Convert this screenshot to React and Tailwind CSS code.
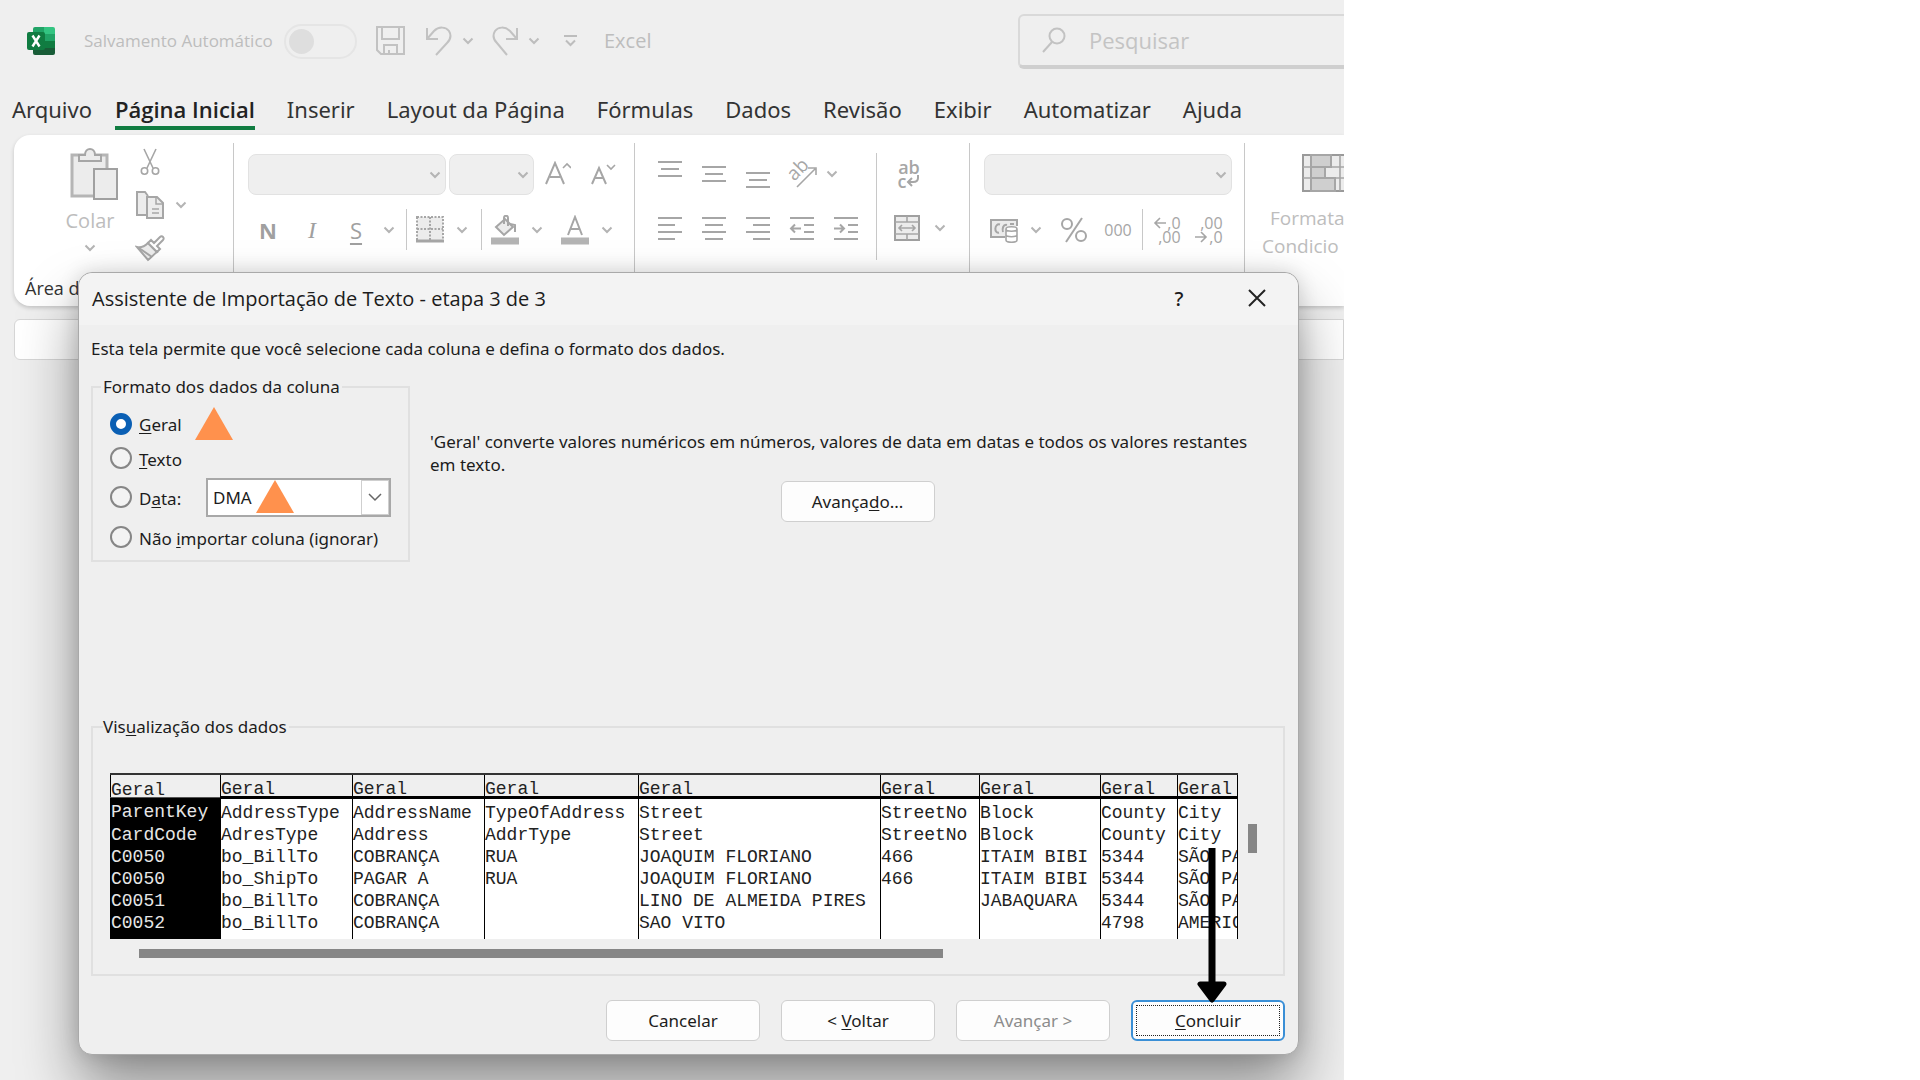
import React from "react";

const GRAY = "#a6a6a6";
const FILL = "#ececec";

function Icon({ w, h, children, className = "" }) {
  return (
    <svg width={w} height={h} viewBox={`0 0 ${w} ${h}`} fill="none" stroke={GRAY} strokeWidth="2" className={`shrink-0 ${className}`} aria-hidden="true">
      {children}
    </svg>
  );
}

function Chevron({ color = "#b4b4b4" }) {
  return (
    <svg width="12" height="8" viewBox="0 0 12 8" fill="none" stroke={color} strokeWidth="2" className="shrink-0" aria-hidden="true">
      <path d="M1.500 1.500 6 6l4.500-4.500" />
    </svg>
  );
}

function Tool({ label, className = "w-[44px]", children }) {
  return (
    <button type="button" aria-label={label} className={`flex h-10 shrink-0 items-center justify-center ${className}`}>
      {children}
    </button>
  );
}

function Rule() {
  return <div className="mx-[6px] h-[41px] w-px shrink-0 bg-[#c8c8c8]" />;
}

function Combo({ label, className }) {
  return (
    <button type="button" aria-label={label} className={`flex h-[41px] shrink-0 items-center justify-end rounded-lg border border-[#e2e2e2] bg-[#efefef] pr-1 ${className}`}>
      <Chevron />
    </button>
  );
}

function Lines({ rows, h = 26 }) {
  return (
    <Icon w={26} h={h}>
      {rows.map(([x, y, len]) => (
        <path key={y} d={`M${x} ${y}h${len}`} strokeWidth="2" />
      ))}
    </Icon>
  );
}

function ExcelLogo() {
  return (
    <svg width="29" height="28" viewBox="0 0 29 28" aria-hidden="true" className="shrink-0">
      <path d="M6 2a2 2 0 0 1 2-2h9v7H6z" fill="#21a366" />
      <path d="M17 0h9a2 2 0 0 1 2 2v5H17z" fill="#33c481" />
      <path d="M6 7h11v7H6z" fill="#107c41" />
      <path d="M17 7h11v7H17z" fill="#21a366" />
      <path d="M6 14h11v7H6z" fill="#185c37" />
      <path d="M17 14h11v7H17z" fill="#107c41" />
      <path d="M6 21h22v5a2 2 0 0 1-2 2H8a2 2 0 0 1-2-2z" fill="#185c37" />
      <rect x="0" y="5" width="18" height="18" rx="2" fill="#107c41" />
      <path d="M5.500 8.500l7 11M12.500 8.500l-7 11" stroke="#fff" strokeWidth="2.400" />
    </svg>
  );
}

function TitleBar() {
  return (
    <header className="flex h-[82px] items-center pl-[27px] text-[#bdbdbd]">
      <ExcelLogo />
      <label htmlFor="autosave" className="ml-[28px] w-[200px] shrink-0 text-[17px] whitespace-nowrap">Salvamento Automático</label>
      <button id="autosave" type="button" role="switch" aria-checked="false" className="flex h-[35px] w-[73px] shrink-0 items-center rounded-full border-2 border-[#e5e5e5] pl-[3px]">
        <span className="size-[25px] rounded-full bg-[#dedede]" />
      </button>
      <button type="button" aria-label="Salvar" className="ml-[19px]">
        <svg width="30" height="30" viewBox="0 0 30 30" fill="none" stroke="#c2c2c2" strokeWidth="2" aria-hidden="true">
          <path d="M1 1h27v27H5l-4-4zM6 1v12h17V1M8 28v-9h13v9M13 28v-4" />
        </svg>
      </button>
      <button type="button" aria-label="Desfazer" className="ml-[19px]">
        <svg width="28" height="30" viewBox="0 0 28 30" fill="none" stroke="#c2c2c2" strokeWidth="2" aria-hidden="true">
          <path d="M2 2v11h11M2 13 9 5c5-5 12-4 15 0 3 5 1 9-2 12L11 29" />
        </svg>
      </button>
      <button type="button" aria-label="Opções de desfazer" className="ml-[9px]"><Chevron color="#bdbdbd" /></button>
      <button type="button" aria-label="Refazer" className="ml-[17px]">
        <svg width="28" height="30" viewBox="0 0 28 30" fill="none" stroke="#c2c2c2" strokeWidth="2" aria-hidden="true">
          <path d="M26 2v11H15M26 13 19 5C14 0 7 1 4 5c-3 5-1 9 2 12l10 12" />
        </svg>
      </button>
      <button type="button" aria-label="Opções de refazer" className="ml-[9px]"><Chevron color="#bdbdbd" /></button>
      <button type="button" aria-label="Personalizar" className="ml-[24px]">
        <svg width="13" height="12" viewBox="0 0 13 12" fill="none" stroke="#bdbdbd" strokeWidth="2" aria-hidden="true">
          <path d="M0 1h13M2 5.500l4.500 4.500L11 5.500" />
        </svg>
      </button>
      <span className="ml-[27px] text-[20px]">Excel</span>
      <div className="mr-[-10px] ml-auto flex h-[55px] w-[336px] shrink-0 items-center rounded-md border-2 border-b-4 border-[#d9d9d9] border-b-[#cfcfcf] pl-[22px]">
        <svg width="25" height="26" viewBox="0 0 25 26" fill="none" stroke="#c2c2c2" strokeWidth="2" aria-hidden="true">
          <circle cx="15" cy="9" r="7.500" />
          <path d="M10 15 1 25" />
        </svg>
        <input type="search" aria-label="Pesquisar" placeholder="Pesquisar" className="ml-[22px] w-[200px] text-[22px] leading-[30px] outline-none placeholder:text-[#c4c4c4]" />
      </div>
    </header>
  );
}

const TABS = ["Inserir", "Layout da Página", "Fórmulas", "Dados", "Revisão", "Exibir", "Automatizar", "Ajuda"];

function Tabs() {
  return (
    <nav className="flex h-[53px] items-start gap-[32px] pt-[13px] pl-[12px] font-['Noto_Sans',sans-serif] text-[22px] leading-[28px] whitespace-nowrap text-[#333]">
      <button type="button" className="-mr-[9px]">Arquivo</button>
      <button type="button" className="border-b-4 border-[#107c41] pb-[3px] font-['Open_Sans',sans-serif] font-semibold text-[#222]">Página Inicial</button>
      {TABS.map((t) => (
        <button key={t} type="button">{t}</button>
      ))}
    </nav>
  );
}

function Clipboard() {
  return (
    <section className="flex w-[220px] shrink-0 flex-col">
      <div className="flex pl-[51px]">
        <button type="button" className="flex w-[50px] flex-col items-center pt-[13px] text-xl text-[#bdbdbd]">
          <Icon w={48} h={54} className="ml-[7px]">
            <path d="M2 7h35v41H2z" fill={FILL} stroke="#b5b5b5" strokeWidth="3" />
            <path d="M9 13V7h6c0-8 10-8 10 0h6v6z" fill={FILL} />
            <path d="M24 21h23v30H24z" fill={FILL} stroke="#a0a0a0" />
          </Icon>
          <span className="mt-1 leading-[30px]">Colar</span>
          <span className="mt-2"><Chevron /></span>
        </button>
        <div className="ml-[18px] flex flex-col items-start pt-[7px]">
          <Tool label="Recortar" className="w-[34px]">
            <Icon w={20} h={28}>
              <path d="M4 1l9 19M16 1 7 20" strokeWidth="1.600" />
              <circle cx="4.500" cy="23" r="3.200" strokeWidth="1.600" />
              <circle cx="15.500" cy="23" r="3.200" strokeWidth="1.600" />
            </Icon>
          </Tool>
          <div className="mt-[3px] flex">
            <Tool label="Copiar" className="w-[34px]">
              <Icon w={30} h={30}>
                <path d="M11 25H2V2h8l3 4" fill={FILL} />
                <path d="M12 7h10l6 6v15H12z" fill={FILL} />
                <path d="M21 7v7h7M17 19h7M17 23h7" strokeWidth="1.500" />
              </Icon>
            </Tool>
            <Tool label="Opções de copiar" className="w-[28px]"><Chevron /></Tool>
          </div>
          <Tool label="Pincel de formatação" className="mt-[3px] w-[34px]">
            <Icon w={30} h={30}>
              <path d="M2 14c5 1 8-1 11-4l9 9c-3 2-5 5-9 8z" fill={FILL} />
              <path d="M13 10l3-3 3 3 6-6c2-2 5 1 3 3l-6 6 3 3-3 3z" fill="#fff" />
              <path d="M4 15l13 9" />
            </Icon>
          </Tool>
        </div>
      </div>
      <span className="mt-[8px] pl-[11px] text-[18px] leading-6 whitespace-nowrap text-[#333]">Área d</span>
    </section>
  );
}

function Font() {
  return (
    <section className="flex w-[401px] shrink-0 flex-col gap-[14px] pt-[19px] pl-[12px]">
      <div className="flex h-[41px] items-center pl-[2px]">
        <Combo label="Fonte" className="w-[198px]" />
        <Combo label="Tamanho da fonte" className="ml-[3px] w-[85px]" />
        <Tool label="Aumentar fonte" className="ml-[2px] w-[44px]">
          <Icon w={26} h={28}>
            <path d="M1 23 10 2l9 21M5 16h10" />
            <path d="M18 7l4-4 4 4" strokeWidth="1.600" />
          </Icon>
        </Tool>
        <Tool label="Diminuir fonte" className="w-[46px]">
          <Icon w={26} h={28}>
            <path d="M2 23 9 7l7 16M5 17h8" />
            <path d="M17 4l4 4 4-4" strokeWidth="1.600" />
          </Icon>
        </Tool>
      </div>
      <div className="flex items-center text-[#a0a0a0]">
        <Tool label="Negrito"><span className="text-[22px] leading-7 font-bold">N</span></Tool>
        <Tool label="Itálico"><span className="font-['Liberation_Serif',serif] text-2xl leading-7 italic">I</span></Tool>
        <Tool label="Sublinhado"><span className="text-[22px] leading-7 underline underline-offset-4">S</span></Tool>
        <Tool label="Opções de sublinhado" className="w-[22px]"><Chevron /></Tool>
        <Rule />
        <Tool label="Bordas" className="w-[34px]">
          <Icon w={28} h={28}>
            <path d="M1 1h26v24H1z" fill={FILL} strokeDasharray="2 1.500" />
            <path d="M14 1v24M1 13h26" strokeDasharray="2 1.500" />
            <path d="M0 25h28" strokeWidth="3" />
          </Icon>
        </Tool>
        <Tool label="Opções de bordas" className="w-[30px]"><Chevron /></Tool>
        <div className="mr-[6px] ml-[4px] h-[41px] w-px bg-[#c8c8c8]" />
        <Tool label="Cor de preenchimento" className="w-[34px]">
          <Icon w={28} h={30}>
            <path d="M5 12 14 4l8 8-9 8z" fill={FILL} />
            <path d="M13 9V3c0-3 4-3 4 0v8M19 9l5 1v7" />
            <path d="M0 26h28" stroke="#b4b4b4" strokeWidth="7" />
          </Icon>
        </Tool>
        <Tool label="Opções de preenchimento" className="w-[30px]"><Chevron /></Tool>
        <Tool label="Cor da fonte" className="w-[46px]">
          <Icon w={28} h={30}>
            <path d="M7 20 14 2l7 18M9 14h10" />
            <path d="M0 26h28" stroke="#b4b4b4" strokeWidth="7" />
          </Icon>
        </Tool>
        <Tool label="Opções de cor da fonte" className="w-[18px]"><Chevron /></Tool>
      </div>
    </section>
  );
}

function Alignment() {
  return (
    <section className="flex w-[335px] shrink-0 items-start pt-[18px] pl-[13px]">
      <div className="flex w-[220px] flex-col gap-[15px]">
        <div className="flex h-[41px] items-center">
          <Tool label="Alinhar em cima"><Lines h={30} rows={[[1, 3, 24], [4, 10, 18], [1, 17, 24]]} /></Tool>
          <Tool label="Alinhar no meio"><Lines h={30} rows={[[1, 8, 24], [4, 15, 18], [1, 22, 24]]} /></Tool>
          <Tool label="Alinhar embaixo"><Lines h={30} rows={[[1, 14, 24], [4, 21, 18], [1, 28, 24]]} /></Tool>
          <Tool label="Orientação">
            <span className="relative flex">
              <Icon w={30} h={30}><path d="M10 28 28 10M21 9h8v7" strokeWidth="1.600" /></Icon>
              <span className="absolute -top-[1px] -left-[1px] -rotate-45 text-[19px] leading-[22px] text-[#a6a6a6]">ab</span>
            </span>
          </Tool>
          <Tool label="Opções de orientação" className="w-[16px]"><Chevron /></Tool>
        </div>
        <div className="flex items-center">
          <Tool label="Alinhar à esquerda"><Lines rows={[[1, 2, 24], [1, 9, 17], [1, 16, 24], [1, 23, 17]]} /></Tool>
          <Tool label="Centralizar"><Lines rows={[[1, 2, 24], [4, 9, 18], [1, 16, 24], [4, 23, 18]]} /></Tool>
          <Tool label="Alinhar à direita"><Lines rows={[[1, 2, 24], [8, 9, 17], [1, 16, 24], [8, 23, 17]]} /></Tool>
          <Tool label="Diminuir recuo">
            <Icon w={26} h={26}><path d="M1 2h24M15 9h10M15 16h10M1 23h24M12 12.500H2M6 8.500l-4 4 4 4" /></Icon>
          </Tool>
          <Tool label="Aumentar recuo">
            <Icon w={26} h={26}><path d="M1 2h24M15 9h10M15 16h10M1 23h24M1 12.500h10M7 8.500l4 4-4 4" /></Icon>
          </Tool>
        </div>
      </div>
      <div className="mx-[8px] h-[107px] w-px bg-[#c8c8c8]" />
      <div className="flex flex-col gap-[14px]">
        <Tool label="Quebrar texto automaticamente" className="mt-px w-[48px]">
          <span className="flex flex-col text-[18px] leading-[14px] font-semibold text-[#a6a6a6]">
            <span>ab</span>
            <span className="flex items-center">c<Icon w={14} h={14}><path d="M12 1v3c0 3-2 4-5 4H2M6 4 2 8l4 4" /></Icon></span>
          </span>
        </Tool>
        <div className="flex">
          <Tool label="Mesclar e centralizar">
            <Icon w={28} h={28}>
              <path d="M2 2h24v24H2z" fill={FILL} stroke="#a0a0a0" />
              <path d="M2 8h24M2 20h24M14 2v6M14 20v6M6 14h16M9 11l-3 3 3 3M19 11l3 3-3 3" strokeWidth="1.600" />
            </Icon>
          </Tool>
          <Tool label="Opções de mesclar" className="w-[22px]"><Chevron /></Tool>
        </div>
      </div>
    </section>
  );
}

function NumberGroup() {
  return (
    <section className="flex w-[275px] shrink-0 flex-col gap-[14px] pt-[19px] pl-[14px]">
      <Combo label="Formato de número" className="w-[248px]" />
      <div className="flex items-center text-[#a6a6a6]">
        <Tool label="Formato de contabilização" className="w-[40px]">
          <Icon w={30} h={26}>
            <path d="M16 20H2V3h26v6" fill={FILL} />
            <path d="M11 7.500C5 6 5 17 10 15.500M18 8c-4-1-5 4-4 7M21 7h4" />
            <path d="M17 12v11c0 3 11 3 11 0V12c0-3-11-3-11 0zm0 0c0 3 11 3 11 0M17 17.500c0 3 11 3 11 0" fill="#fff" strokeWidth="1.600" />
          </Icon>
        </Tool>
        <Tool label="Opções de contabilização" className="w-[24px]"><Chevron /></Tool>
        <Tool label="Porcentagem" className="w-[52px]">
          <Icon w={28} h={26}>
            <circle cx="7" cy="7" r="5" />
            <circle cx="21" cy="19" r="5" />
            <path d="M22 1 6 25" />
          </Icon>
        </Tool>
        <Tool label="Separador de milhares" className="w-[36px]"><span className="text-base">000</span></Tool>
        <Rule />
        <Tool label="Aumentar casas decimais" className="w-[36px]">
          <span className="flex flex-col items-end text-base leading-[14px]">
            <span className="flex items-center"><Icon w={14} h={12}><path d="M13 6H2M7 1 2 6l5 5" strokeWidth="1.600" /></Icon>,0</span>
            <span>,00</span>
          </span>
        </Tool>
        <Tool label="Diminuir casas decimais" className="w-[48px]">
          <span className="flex flex-col items-end text-base leading-[14px]">
            <span>,00</span>
            <span className="flex items-center"><Icon w={14} h={12}><path d="M0 6h11M6 1l5 5-5 5" strokeWidth="1.600" /></Icon>,0</span>
          </span>
        </Tool>
      </div>
    </section>
  );
}

function Styles() {
  return (
    <section className="flex shrink-0 flex-col pt-[18px] pl-[17px]">
      <button type="button" className="flex flex-col items-start text-[19px] leading-7 text-[#bdbdbd]">
        <Icon w={48} h={40} className="ml-9">
          <path d="M5 2h42v36H5z" fill={FILL} stroke="#9a9a9a" />
          <path d="M13 2h20v12H13zM13 14h14v11H13zM13 25h24v13H13z" fill="#cfcfcf" />
          <path d="M5 14h42M5 25h42M13 2v36M42 2v36" strokeWidth="1.600" />
        </Icon>
        <span className="mt-[11px] ml-[8px]">Formata</span>
        <span>Condicio</span>
      </button>
    </section>
  );
}

function Divider() {
  return <div className="-ml-px mt-2 h-[150px] w-px shrink-0 bg-[#c8c8c8]" />;
}

function Ribbon() {
  return (
    <div className="ml-[14px] flex h-[171px] overflow-hidden rounded-l-2xl bg-white shadow-[0_2px_4px_rgba(0,0,0,0.18)]">
      <Clipboard />
      <Divider />
      <Font />
      <Divider />
      <Alignment />
      <Divider />
      <NumberGroup />
      <Divider />
      <Styles />
    </div>
  );
}

function Triangle() {
  return (
    <svg width="38" height="33" viewBox="0 0 38 33" aria-hidden="true" className="pointer-events-none">
      <path d="M19 0 38 33H0z" fill="#ff914d" />
    </svg>
  );
}

function Radio({ id, checked, children }) {
  return (
    <div className="flex items-center">
      <input
        id={id}
        type="radio"
        name="formato"
        defaultChecked={checked}
        className="size-[22px] shrink-0 appearance-none rounded-full border-2 border-[#868686] bg-[#f3f3f3] checked:border-[6px] checked:border-[#0a5fb4] checked:bg-white"
      />
      <label htmlFor={id} className="pt-[2px] pl-[7px] whitespace-nowrap">{children}</label>
    </div>
  );
}

const U = ({ children }) => <span className="underline underline-offset-2">{children}</span>;

function FormatFieldset() {
  return (
    <fieldset className="h-[188px] w-[318px] shrink-0 border-2 border-[#e0e0e0] px-[17px]">
      <legend className="-ml-[9px] px-[2px] leading-[26px]">Formato dos dados da coluna</legend>
      <div className="flex flex-col pt-[2px]">
        <div className="flex h-[38px] items-center gap-[13px] pt-[5px]">
          <Radio id="geral" checked><U>G</U>eral</Radio>
          <Triangle />
        </div>
        <div className="flex h-[36px] items-center">
          <Radio id="texto"><U>T</U>exto</Radio>
        </div>
        <div className="flex h-[42px] items-center">
          <div className="w-[96px]"><Radio id="data">D<U>a</U>ta:</Radio></div>
          <div className="relative w-[185px] shrink-0">
            <select aria-label="Formato de data" className="h-[39px] w-full appearance-none border-2 border-[#a8a8a8] bg-white pl-[5px]">
              <option>DMA</option>
            </select>
            <span className="pointer-events-none absolute top-[2px] right-[2px] flex h-[35px] w-[28px] items-center justify-center border border-[#cfcfcf]">
              <svg width="14" height="9" viewBox="0 0 14 9" fill="none" stroke="#666" strokeWidth="1.500" aria-hidden="true"><path d="M1 1l6 6 6-6" /></svg>
            </span>
            <span className="absolute top-[2px] left-[50px]"><Triangle /></span>
          </div>
        </div>
        <div className="flex h-[38px] items-center">
          <Radio id="ignorar">Não <U>i</U>mportar coluna (ignorar)</Radio>
        </div>
      </div>
    </fieldset>
  );
}

const COLUMNS = [
  "w-[110px]", "w-[132px]", "w-[132px]", "w-[154px]", "w-[242px]", "w-[99px]", "w-[121px]", "w-[77px]", "w-[60px]",
];
const ROWS = [
  ["ParentKey", "AddressType", "AddressName", "TypeOfAddress", "Street", "StreetNo", "Block", "County", "City"],
  ["CardCode", "AdresType", "Address", "AddrType", "Street", "StreetNo", "Block", "County", "City"],
  ["C0050", "bo_BillTo", "COBRANÇA", "RUA", "JOAQUIM FLORIANO", "466", "ITAIM BIBI", "5344", "SÃO PA"],
  ["C0050", "bo_ShipTo", "PAGAR A", "RUA", "JOAQUIM FLORIANO", "466", "ITAIM BIBI", "5344", "SÃO PA"],
  ["C0051", "bo_BillTo", "COBRANÇA", "", "LINO DE ALMEIDA PIRES", "", "JABAQUARA", "5344", "SÃO PA"],
  ["C0052", "bo_BillTo", "COBRANÇA", "", "SAO VITO", "", "", "4798", "AMERIC"],
];

function Preview() {
  return (
    <fieldset className="border-2 border-[#e0e0e0] pb-[16px] pl-[17px]">
      <legend className="-ml-[7px] pr-[2px] leading-[26px]">Vis<U>u</U>alização dos dados</legend>
      <div className="flex pt-[33px]">
        <table className="w-[1128px] table-fixed border-collapse bg-white text-left font-['Liberation_Mono',monospace] text-lg leading-[22px] text-[#222]">
          <colgroup>
            {COLUMNS.map((c, i) => <col key={i} className={c} />)}
          </colgroup>
          <thead>
            <tr>
              {COLUMNS.map((c, i) => (
                <th key={i} className={`h-[23px] border-x border-t-2 border-x-black border-t-[#333] bg-[#efefef] p-0 align-bottom leading-[14px] font-normal ${i ? "border-b-[3px] border-b-black" : "border-b border-b-[#555]"}`}>Geral</th>
              ))}
            </tr>
          </thead>
          <tbody>
            {ROWS.map((r, n) => (
              <tr key={n}>
                {r.map((v, i) => (
                  <td key={i} className={`overflow-hidden border-x border-black p-0 whitespace-nowrap ${n ? "" : "pt-[3px]"} ${i ? "" : "bg-black text-[#e6e6e6]"}`}>{v}</td>
                ))}
              </tr>
            ))}
            <tr>
              {COLUMNS.map((c, i) => <td key={i} className={`h-[5px] border-x border-black p-0 ${i ? "" : "bg-black"}`} />)}
            </tr>
          </tbody>
        </table>
        <div className="mt-[51px] ml-[10px] h-[29px] w-[9px] bg-[#868686]" />
      </div>
      <div className="mt-[10px] ml-[29px] h-[9px] w-[804px] bg-[#868686]" />
    </fieldset>
  );
}

const BUTTON = "h-[41px] w-[154px] rounded-md border border-[#cfcfcf] bg-[#fdfdfd]";

function Dialog() {
  return (
    <div role="dialog" aria-labelledby="dialog-title" className="absolute top-[272px] right-[45px] left-[78px] rounded-[14px] border border-[#a9a9a9] bg-[#efefef] font-['Noto_Sans',sans-serif] text-[17px] leading-[23px] text-[#1c1c1c] shadow-[0_34px_60px_rgba(0,0,0,0.4),0_0_20px_rgba(0,0,0,0.14)]">
      <div className="flex h-[52px] items-center rounded-t-[14px] bg-[#f3f3f3] pb-[2px] pl-[13px]">
        <h1 id="dialog-title" className="font-['Open_Sans',sans-serif] text-[20px]">Assistente de Importação de Texto - etapa 3 de 3</h1>
        <button type="button" aria-label="Ajuda" className="ml-auto w-[30px] text-[20px] font-medium">?</button>
        <button type="button" aria-label="Fechar" className="mr-[32px] ml-[54px]">
          <svg width="18" height="18" viewBox="0 0 18 18" stroke="#222" strokeWidth="2" aria-hidden="true"><path d="M1 1l16 16M17 1 1 17" /></svg>
        </button>
      </div>
      <div className="pr-[13px] pb-[13px] pl-[12px]">
        <p className="mt-[12px]">Esta tela permite que você selecione cada coluna e defina o formato dos dados.</p>
        <div className="mt-[14px] flex">
          <FormatFieldset />
          <div className="flex flex-1 flex-col items-center pt-[56px] pl-[20px]">
            <p className="w-full pr-[18px]">'Geral' converte valores numéricos em números, valores de data em datas e todos os valores restantes em texto.</p>
            <button type="button" className={`mt-[5px] ${BUTTON}`}>Avança<U>d</U>o...</button>
          </div>
        </div>
        <div className="mt-[152px]">
          <Preview />
        </div>
        <div className="relative mt-[24px] flex justify-end gap-[21px]">
          <button type="button" className={BUTTON}>Cancelar</button>
          <button type="button" className={BUTTON}>&lt; <U>V</U>oltar</button>
          <button type="button" disabled className={`${BUTTON} text-[#8c8c8c]`}>Avançar &gt;</button>
          <button type="button" className="h-[41px] w-[154px] rounded-md border-2 border-[#3a8fd6] bg-[#fdfdfd] p-[3px]">
            <span className="flex h-full items-center justify-center border border-dotted border-[#222]"><span><U>C</U>oncluir</span></span>
          </button>
          <svg width="30" height="156" viewBox="0 0 30 156" aria-hidden="true" className="pointer-events-none absolute right-[58px] bottom-[37px]">
            <path d="M15 0v136" stroke="#000" strokeWidth="7" />
            <path d="M3 136h24l-12 16z" fill="#000" stroke="#000" strokeWidth="5" strokeLinejoin="round" />
          </svg>
        </div>
      </div>
    </div>
  );
}

export default function App() {
  return (
    <div className="min-h-screen bg-white font-['Open_Sans','Noto_Sans',sans-serif]">
      <main className="relative min-h-screen w-[70%] overflow-hidden bg-[#efefef]">
        <TitleBar />
        <Tabs />
        <Ribbon />
        <div className="mt-[13px] ml-[14px] h-[41px] rounded-l-md border border-[#d6d6d6] bg-white" />
        <Dialog />
      </main>
    </div>
  );
}
